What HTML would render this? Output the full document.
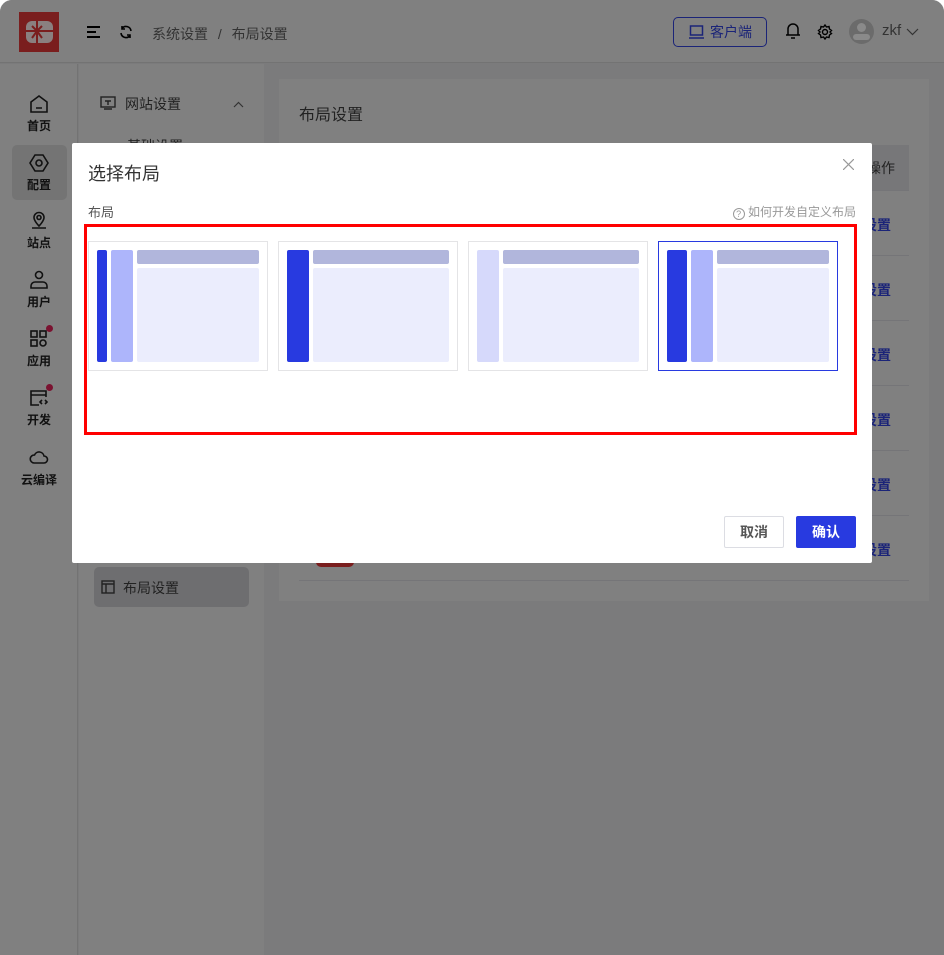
<!DOCTYPE html>
<html><head><meta charset="utf-8"><style>
*{box-sizing:border-box;margin:0;padding:0}
html,body{width:944px;height:955px;overflow:hidden;background:#fff;font-family:"Liberation Sans","Noto Sans CJK SC",sans-serif}
.app{position:absolute;left:0;top:0;width:944px;height:955px;background:#7b7b7c;border-radius:12px 12px 0 0;overflow:hidden}
.hdr{position:absolute;left:0;top:0;width:944px;height:63px;background:#808080;border-bottom:1px solid #737373}
.rail{position:absolute;left:0;top:64px;width:78px;height:891px;background:#808080;border-right:1px solid #737373}
.sub{position:absolute;left:79px;top:64px;width:185px;height:891px;background:#808080}
.card{position:absolute;left:279px;top:79px;width:650px;height:522px;background:#808080}
.t{position:absolute;white-space:nowrap}
.ri{position:absolute;left:0;width:78px;text-align:center;font-size:12px;color:#111;font-weight:bold}
.ri svg{display:block;margin:0 auto 3px}
.row{position:absolute;left:299px;width:610px;height:1px;background:#757578}
.lk{position:absolute;left:863px;font-size:14px;color:#1b2478;font-weight:bold}
.modal{position:absolute;left:72px;top:143px;width:800px;height:420px;background:#fff;border-radius:2px}
.lay{position:absolute;top:98px;width:180px;height:130px;border:1px solid #e4e4e6;background:#fff}
.b{position:absolute;border-radius:2px}
.d{background:#283ae0}.l{background:#adb5fb}.h{background:#b1b6dc}.m{background:#ebedfd}.p{background:#d6d9fb}
</style></head><body><div class="app">
<div class="hdr">
 <div style="position:absolute;left:19px;top:12px;width:40px;height:40px;background:#7a1e1e"></div>
 <div style="position:absolute;left:26px;top:21px;width:27px;height:22px;border-radius:6px;background:#8a8080;"></div>
 <svg style="position:absolute;left:26px;top:21px" width="27" height="22" fill="none" stroke="#7a1e1e" stroke-width="2"><path d="M11 0v22M0 10h27M11 10l-5-5M11 10l5-5M11 10l-5 7M11 10l5 7"/></svg>
 <svg style="position:absolute;left:87px;top:26px" width="14" height="12"><path d="M0 1h13M0 6h9M0 11h13" stroke="#000" stroke-width="2"/></svg>
 <svg style="position:absolute;left:119px;top:25px" width="14" height="14" fill="none" stroke="#000" stroke-width="1.6"><path d="M12 6A5 5 0 0 0 3 3.5M2 8a5 5 0 0 0 9 2.5"/><path d="M3 1v3h3M11 13v-3H8"/></svg>
 <div class="t" style="left:152px;top:24px;font-size:14px;color:#333">系统设置 <span style="margin:0 6px">/</span> 布局设置</div>
 <div style="position:absolute;left:673px;top:17px;width:94px;height:30px;border:1px solid #1b2478;border-radius:5px"></div>
 <svg style="position:absolute;left:689px;top:25px" width="16" height="14" fill="none" stroke="#1b2478" stroke-width="1.5"><rect x="1.5" y="1" width="12" height="9"/><path d="M0 13h15"/></svg>
 <div class="t" style="left:710px;top:22px;font-size:14px;color:#1b2478">客户端</div>
 <svg style="position:absolute;left:785px;top:22px" width="16" height="18" fill="none" stroke="#000" stroke-width="1.5"><path d="M3 13V7a5 5 0 0 1 10 0v6h2H1zM6 16h4"/></svg>
 <svg style="position:absolute;left:817px;top:24px" width="16" height="16" fill="none" stroke="#000" stroke-width="1.4"><circle cx="8" cy="8" r="2.5"/><path d="M8 1l1.5 2 2.5-.5.5 2.5 2 1.5-1.5 1.5 1.5 1.5-2 1.5-.5 2.5-2.5-.5L8 15l-1.5-2-2.5.5-.5-2.5-2-1.5L3 8 1.5 6.5l2-1.5.5-2.5 2.5.5z"/></svg>
 <div style="position:absolute;left:849px;top:19px;width:25px;height:25px;border-radius:50%;background:#6b6b6b"></div>
 <div style="position:absolute;left:857px;top:23px;width:9px;height:9px;border-radius:50%;background:#8a8a8a"></div>
 <div style="position:absolute;left:853px;top:34px;width:17px;height:6px;border-radius:4px;background:#8a8a8a"></div>
 <div class="t" style="left:882px;top:22px;font-size:15px;color:#333">zkf</div>
 <svg style="position:absolute;left:906px;top:28px" width="13" height="8" fill="none" stroke="#333" stroke-width="1.2"><path d="M1 1l5.5 5.5L12 1"/></svg>
</div>
<div class="rail">
 <div class="ri" style="top:30px"><svg width="20" height="20" fill="none" stroke="#111" stroke-width="1.6"><path d="M2 8l8-6 8 6v10H2z M7 14h6"/></svg>首页</div>
 <div style="position:absolute;left:12px;top:81px;width:55px;height:55px;border-radius:5px;background:#747474"></div>
 <div class="ri" style="top:89px"><svg width="20" height="20" fill="none" stroke="#111" stroke-width="1.6"><path d="M6 2h8l5 8-5 8H6l-5-8z"/><circle cx="10" cy="10" r="3"/></svg>配置</div>
 <div class="ri" style="top:147px"><svg width="20" height="20" fill="none" stroke="#111" stroke-width="1.6"><path d="M10 15s-5-5-5-8.5a5 5 0 0 1 10 0C15 10 10 15 10 15zM3 17h14"/><circle cx="10" cy="6.5" r="2"/></svg>站点</div>
 <div class="ri" style="top:206px"><svg width="20" height="20" fill="none" stroke="#111" stroke-width="1.6"><circle cx="10" cy="5" r="3.5"/><path d="M2 18v-2a4 4 0 0 1 4-4h8a4 4 0 0 1 4 4v2z"/></svg>用户</div>
 <div class="ri" style="top:265px"><svg width="20" height="20" fill="none" stroke="#111" stroke-width="1.6"><rect x="2" y="2" width="6" height="6"/><rect x="11" y="2" width="6" height="6"/><rect x="2" y="11" width="6" height="6"/><circle cx="14" cy="14" r="3"/></svg>应用</div>
 <div style="position:absolute;left:46px;top:261px;width:7px;height:7px;border-radius:50%;background:#7a1230"></div>
 <div class="ri" style="top:324px"><svg width="20" height="20" fill="none" stroke="#111" stroke-width="1.6"><path d="M17 9V3H2v14h8M2 7h15"/><path d="M13 12l-2 2 2 2M16 12l2 2-2 2"/></svg>开发</div>
 <div style="position:absolute;left:46px;top:320px;width:7px;height:7px;border-radius:50%;background:#7a1230"></div>
 <div class="ri" style="top:384px"><svg width="20" height="20" fill="none" stroke="#111" stroke-width="1.6"><path d="M5 15h10a3.5 3.5 0 0 0 0-7 5 5 0 0 0-9.5-1A4 4 0 0 0 5 15z"/></svg>云编译</div>
</div>
<div class="sub">
 <svg style="position:absolute;left:21px;top:32px" width="16" height="14" fill="none" stroke="#222" stroke-width="1.4"><rect x="1" y="1" width="14" height="10"/><path d="M4 13h8M5 5h6M8 5v4"/></svg>
 <div class="t" style="left:46px;top:30px;font-size:14px;color:#222">网站设置</div>
 <svg style="position:absolute;left:154px;top:37px" width="11" height="7" fill="none" stroke="#333" stroke-width="1.2"><path d="M1 6l4.5-4.5L10 6"/></svg>
 <div class="t" style="left:48px;top:72px;font-size:14px;color:#222">基础设置</div>
 <div style="position:absolute;left:15px;top:503px;width:155px;height:40px;border-radius:5px;background:#6e6e70"></div>
 <svg style="position:absolute;left:22px;top:516px" width="14" height="14" fill="none" stroke="#222" stroke-width="1.4"><rect x="1" y="1" width="12" height="12"/><path d="M1 4h12M5 4v9"/></svg>
 <div class="t" style="left:44px;top:514px;font-size:14px;color:#222">布局设置</div>
</div>
<div class="card">
 <div class="t" style="left:20px;top:22px;font-size:16px;color:#222">布局设置</div>
 <div style="position:absolute;left:20px;top:66px;width:610px;height:45px;background:#777779"></div>
 <div class="t" style="left:588px;top:79px;font-size:14px;color:#222">操作</div>
 <div style="position:absolute;left:37px;top:478px;width:38px;height:10px;background:#7a1e1e;border-radius:0 0 5px 5px"></div>
</div>
<div class="row" style="top:190px"></div><div class="row" style="top:255px"></div><div class="row" style="top:320px"></div><div class="row" style="top:385px"></div><div class="row" style="top:450px"></div><div class="row" style="top:515px"></div><div class="row" style="top:580px"></div>
<div class="lk" style="top:215px">设置</div><div class="lk" style="top:280px">设置</div><div class="lk" style="top:345px">设置</div><div class="lk" style="top:410px">设置</div><div class="lk" style="top:475px">设置</div><div class="lk" style="top:540px">设置</div>

<div class="modal">
 <div class="t" style="left:16px;top:17px;font-size:18px;color:#333">选择布局</div>
 <svg style="position:absolute;left:771px;top:16px" width="11" height="11" stroke="#999" stroke-width="1.2"><path d="M0 0l11 11M11 0L0 11"/></svg>
 <div class="t" style="left:16px;top:59px;font-size:13px;color:#555">布局</div>
 <div class="t" style="right:16px;top:60px;font-size:12px;color:#999"><span style="display:inline-block;width:12px;height:12px;border:1px solid #999;border-radius:50%;font-size:9px;line-height:10px;text-align:center;vertical-align:-1px">?</span> 如何开发自定义布局</div>
 <div style="position:absolute;left:12px;top:81px;width:773px;height:211px;border:3px solid #f00"></div>
 <div class="lay" style="left:16px">
  <div class="b d" style="left:8px;top:8px;width:10px;height:112px"></div>
  <div class="b l" style="left:22px;top:8px;width:22px;height:112px"></div>
  <div class="b h" style="left:48px;top:8px;width:122px;height:14px"></div>
  <div class="b m" style="left:48px;top:26px;width:122px;height:94px"></div>
 </div>
 <div class="lay" style="left:206px">
  <div class="b d" style="left:8px;top:8px;width:22px;height:112px"></div>
  <div class="b h" style="left:34px;top:8px;width:136px;height:14px"></div>
  <div class="b m" style="left:34px;top:26px;width:136px;height:94px"></div>
 </div>
 <div class="lay" style="left:396px">
  <div class="b p" style="left:8px;top:8px;width:22px;height:112px"></div>
  <div class="b h" style="left:34px;top:8px;width:136px;height:14px"></div>
  <div class="b m" style="left:34px;top:26px;width:136px;height:94px"></div>
 </div>
 <div class="lay" style="left:586px;border-color:#283ae0">
  <div class="b d" style="left:8px;top:8px;width:20px;height:112px"></div>
  <div class="b l" style="left:32px;top:8px;width:22px;height:112px"></div>
  <div class="b h" style="left:58px;top:8px;width:112px;height:14px"></div>
  <div class="b m" style="left:58px;top:26px;width:112px;height:94px"></div>
 </div>
 <div style="position:absolute;left:652px;top:373px;width:60px;height:32px;border:1px solid #dcdde3;border-radius:2px;font-size:14px;font-weight:bold;color:#555;text-align:center;line-height:30px">取消</div>
 <div style="position:absolute;left:724px;top:373px;width:60px;height:32px;background:#283ae0;border-radius:2px;font-size:14px;font-weight:bold;color:#fff;text-align:center;line-height:32px">确认</div>
</div>
</div></body></html>
